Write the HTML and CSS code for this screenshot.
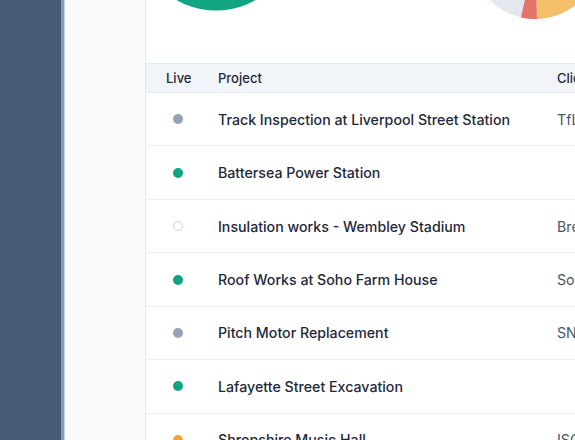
FILE: index.html
```html
<!DOCTYPE html>
<html lang="en">
<head>
<meta charset="utf-8">
<title>Projects</title>
<link rel="stylesheet" href="styles.css">
</head>
<body>
<div class="app">
  <aside class="sidebar"></aside>
  <div class="sidebar-edge"></div>
  <main class="main">
    <section class="card">
      <div class="charts">
        <svg class="chart chart-status" width="200" height="63" viewBox="0 0 200 63">
          <circle cx="70" cy="-69.5" r="80" fill="#12a582"/>
        </svg>
        <svg class="chart chart-pie" width="300" height="63" viewBox="0 0 300 63">
          <circle cx="189" cy="-44" r="63" fill="#e3e8ef"/>
          <path d="M189,-44 L191,19 A63,63 0 0 0 189,-107 Z" fill="#f4bf69"/>
          <path d="M189,-44 L174.9,17.4 A63,63 0 0 0 191,19 Z" fill="#e4746a"/>
        </svg>
      </div>
      <div class="table">
        <div class="row head">
          <div class="cell live">Live</div>
          <div class="cell project">Project</div>
          <div class="cell client">Client</div>
        </div>
        <div class="row">
          <div class="cell live"><span class="dot dot-idle"></span></div>
          <div class="cell project">Track Inspection at Liverpool Street Station</div>
          <div class="cell client">TfL Rail</div>
        </div>
        <div class="row">
          <div class="cell live"><span class="dot dot-live"></span></div>
          <div class="cell project">Battersea Power Station</div>
          <div class="cell client"></div>
        </div>
        <div class="row">
          <div class="cell live"><span class="dot dot-off"></span></div>
          <div class="cell project">Insulation works - Wembley Stadium</div>
          <div class="cell client">Brent Council</div>
        </div>
        <div class="row">
          <div class="cell live"><span class="dot dot-live"></span></div>
          <div class="cell project">Roof Works at Soho Farm House</div>
          <div class="cell client">Soho House</div>
        </div>
        <div class="row">
          <div class="cell live"><span class="dot dot-idle"></span></div>
          <div class="cell project">Pitch Motor Replacement</div>
          <div class="cell client">SNC Lavalin</div>
        </div>
        <div class="row">
          <div class="cell live"><span class="dot dot-live"></span></div>
          <div class="cell project">Lafayette Street Excavation</div>
          <div class="cell client"></div>
        </div>
        <div class="row">
          <div class="cell live"><span class="dot dot-warn"></span></div>
          <div class="cell project">Shropshire Music Hall</div>
          <div class="cell client">ISG Ltd</div>
        </div>
      </div>
    </section>
  </main>
</div>
</body>
</html>
```

FILE: styles.css
```css
* { box-sizing: border-box; }
html, body {
  margin: 0;
  padding: 0;
  width: 575px;
  height: 440px;
  overflow: hidden;
  font-family: Inter, "Noto Sans", "Liberation Sans", sans-serif;
  color: #1e293b;
  background: #f8fafc;
}
.app {
  display: flex;
  width: 575px;
  height: 440px;
  overflow: hidden;
}
.sidebar {
  flex: 0 0 61px;
  background: #485a76;
}
.sidebar-edge {
  flex: 0 0 4px;
  background: #8d9cb6;
  border-right: 1px solid #c9d2e0;
}
.main {
  flex: 0 0 auto;
  width: 700px;
  background: #f8fafc;
  padding-left: 80px;
}
.card {
  background: #fff;
  border-left: 1px solid #e5e7eb;
  height: 440px;
  overflow: hidden;
}
.charts {
  display: flex;
  height: 63px;
  overflow: hidden;
}
.chart { display: block; flex: 0 0 auto; }
.table { display: flex; flex-direction: column; }
.row {
  display: grid;
  grid-template-columns: 72px 339px 1fr;
  align-items: center;
  height: 53.45px;
  border-bottom: 1px solid #eceff3;
}
.row.head {
  height: 30px;
  background: #f1f5f9;
  border-top: 1px solid #e6ebf1;
  border-bottom: 1px solid #e6ebf1;
  font-size: 13px;
  font-weight: 500;
  color: #1e293b;
}
.cell { white-space: nowrap; }
.live {
  padding-left: 20px;
  width: 44px;
  display: flex;
  justify-content: center;
}
.row.head .live { display: block; width: auto; }
.project {
  font-size: 14.2px;
  font-weight: 500;
  color: #1e293b;
}
.row.head .project, .row.head .client { font-size: 13px; color: #1e293b; font-weight: 500; }
.client {
  font-size: 14.2px;
  color: #475569;
}
.dot {
  display: block;
  width: 10px;
  height: 10px;
  border-radius: 50%;
}
.dot-idle { background: #94a3b8; }
.dot-live { background: #10a37f; }
.dot-warn { background: #f2a23c; }
.dot-off { background: #fff; border: 1px solid #cbd5e1; }
```
